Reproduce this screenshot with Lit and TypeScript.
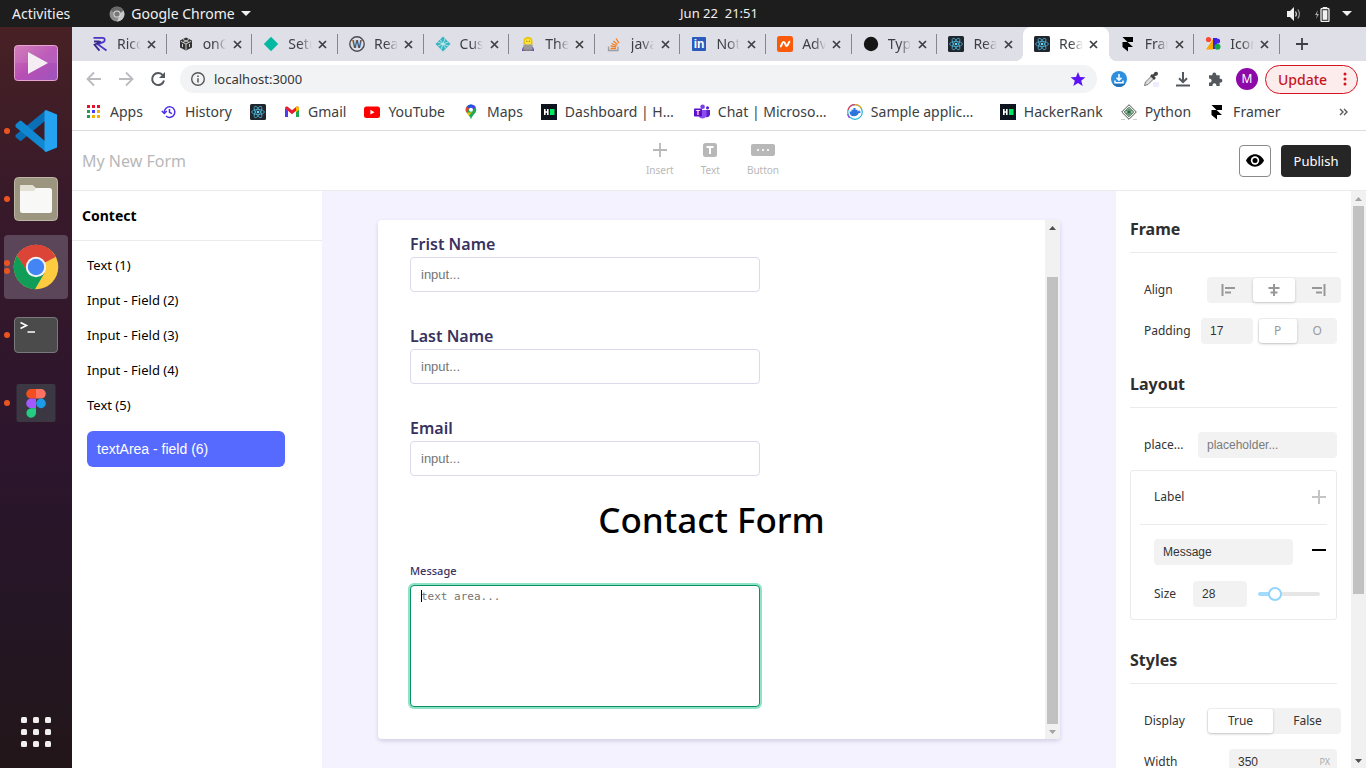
import { LitElement, html, css, svg, nothing, TemplateResult, SVGTemplateResult } from "lit";
import { customElement, state } from "lit/decorators.js";
import { classMap } from "lit/directives/class-map.js";
import { styleMap } from "lit/directives/style-map.js";

const draw = (body: SVGTemplateResult, w = 16, h = 16, box = `0 0 ${w} ${h}`): TemplateResult =>
  html`<svg width=${w} height=${h} viewBox=${box} fill="none" aria-hidden="true">${body}</svg>`;

const reactLogo = draw(svg`
  <rect width="16" height="16" rx="1.5" fill="#20262b"/>
  <g stroke="#4fb3d6" stroke-width="0.8">
    <ellipse cx="8" cy="8" rx="6.4" ry="2.5"/>
    <ellipse cx="8" cy="8" rx="6.4" ry="2.5" transform="rotate(60 8 8)"/>
    <ellipse cx="8" cy="8" rx="6.4" ry="2.5" transform="rotate(120 8 8)"/>
  </g><circle cx="8" cy="8" r="1.3" fill="#61dafb"/>`);

const framerLogo = draw(svg`<path d="M2.500 1h10.500v5H7.500zM2.500 6H7.500l5.500 5H8v4.500L2.500 11z" fill="#000"/>`);

const hackerRankLogo = draw(svg`
  <rect width="16" height="16" fill="#0e141e"/>
  <path d="M3 5h1.600v2.200h1.400V5h1.600v6H6V8.800H4.600V11H3z" fill="#fff"/>
  <rect x="9" y="5" width="4.500" height="6" fill="#00ea64"/>`);

const favicons: Record<string, TemplateResult> = {
  ricon: draw(svg`<g stroke="#4a33c8" stroke-width="1.800">
    <path d="M1.500 1.800h9c3 0 3 4.200-.5 4.700L6 8.500l8.500 6"/><path d="M2 5.500h5.500M9 5.500L2.500 8.700l5 6" stroke="#392a8c"/></g>`),
  cube: draw(svg`<path d="M8 1.500l6 3v7l-6 3-6-3v-7z" fill="#333"/>
    <path d="M8 8v6M8 8L2.800 5.300M8 8l5.200-2.700M5 3.500l6 3M11 3.500l-6 3M4.500 8v3M11.500 8v3" stroke="#ddd" stroke-width="0.9"/>`),
  diamond: draw(svg`<path d="M8 .8L15.200 8 8 15.200.8 8z" fill="#04b8a2"/>`),
  wiki: draw(svg`<circle cx="8" cy="8" r="7.200" stroke="#4b4d50" stroke-width="1.400"/>
    <text x="8" y="11.600" font-family="Liberation Sans" font-weight="bold" font-size="10" text-anchor="middle" fill="#4b4d50">W</text>`),
  netlify: draw(svg`<path d="M8 .5L15.500 8 8 15.500.5 8z" fill="#38b5c0"/>
    <path d="M2.500 6l11 4M5 3.500l6 9M10 2.500L6 13.500M3 10l10-4" stroke="#dff4f5" stroke-width="0.7"/>`),
  technologist: draw(svg`<path d="M3.500 8.500V5C3.500 2 5.500 1 8 1s4.500 1 4.500 4v3.500z" fill="#e6c200"/>
    <circle cx="8" cy="5.800" r="3.200" fill="#ffe23b"/><path d="M6.400 5.300h.9M8.900 5.300h.9" stroke="#553" />
    <path d="M2 15c0-4 2-5.500 6-5.500S14 11 14 15z" fill="#6a45b8"/>
    <rect x="3.500" y="8.500" width="9" height="6" rx=".6" fill="#9a9a9a"/><rect x="4" y="13.500" width="8" height="1.500" fill="#808080"/>`),
  stack: draw(svg`<path d="M2.500 10.500v4h9.500v-4" stroke="#9a9ea3" stroke-width="1.300"/>
    <path d="M4.500 12.500h5.600M4.700 10l5.500.9M5.500 7.500l5.100 2.100M7.200 4.900l4.300 3.500M10 2.500l3 4.600" stroke="#f48024" stroke-width="1.300"/>`),
  linkedin: draw(svg`<rect x="1" y="1" width="14" height="14" rx="1" fill="#2a5bbd"/>
    <text x="8" y="12.300" font-family="Liberation Sans" font-weight="bold" font-size="12" text-anchor="middle" fill="#fff">in</text>`),
  namecheap: draw(svg`<rect width="16" height="16" rx="2.500" fill="#fa5b0a"/>
    <path d="M3 10.500c2.200 0 1.600-4.500 3.600-4.500s1.600 4 3.200 4S11 5.500 13.200 5.500" stroke="#fff" stroke-width="2"/>`),
  dot: draw(svg`<circle cx="8" cy="8" r="7.200" fill="#151515"/>`),
  react: reactLogo,
  framer: framerLogo,
  iconify: draw(svg`<circle cx="3.500" cy="3.500" r="2.600" fill="#f43"/><path d="M1 13.500L8 3v10.500z" fill="#f9a800"/>
    <path d="M8 2h4v11H8z" fill="#3b1ee0"/>
    <circle cx="12.500" cy="5" r="2.600" fill="#4a22e8"/><circle cx="12.500" cy="10.800" r="3" fill="#0fa948"/>`),
};

const marks: Record<string, TemplateResult> = {
  apps: draw(svg`${[0, 1, 2].map((r) => [0, 1, 2].map((c) => svg`<rect x=${1 + c * 5} y=${1 + r * 5} width="3" height="3"
    fill=${["#e0122f", "#e0122f", "#e0122f", "#1e9c4f", "#4b3df5", "#f0b400", "#1e9c4f", "#f0b400", "#f0b400"][r * 3 + c]}/>`))}`),
  history: draw(svg`<g stroke="#4a2ff0" stroke-width="1.500"><path d="M3.300 8.600A5.300 5.300 0 1 1 5 12"/><path d="M.8 7l2.500 2.400L5.800 7"/><path d="M8.500 5v3.300l2.400 1.400"/></g>`),
  react: reactLogo,
  gmail: draw(svg`<path d="M1 4v9h3V6.500z" fill="#4b3df5"/><path d="M15 4v9h-3V6.500z" fill="#1fa950"/>
    <path d="M1 4.200C1 2.600 2.700 2 4 3l4 3.200L12 3c1.300-1 3-.4 3 1.200l-7 6z" fill="#ea1b2d"/><path d="M12 3c1.300-1 3-.4 3 1.200v1.600l-3 2.400z" fill="#fbbc04"/>`),
  youtube: draw(svg`<rect y="2.500" width="16" height="11.500" rx="2.500" fill="#f00"/><path d="M6.400 5.800v4.800l4.100-2.400z" fill="#fff"/>`),
  maps: draw(svg`<path d="M8 .5a5.300 5.300 0 0 0-5.300 5.300c0 3.700 4 5 5.300 9.700 1.300-4.700 5.300-6 5.300-9.700A5.300 5.300 0 0 0 8 .5z" fill="#1fa950"/>
    <path d="M3.400 8.600l2.900-4L3.800 2.600a5.400 5.400 0 0 0-.4 6z" fill="#ea4335"/><path d="M3.400 8.600c.7 1.200 1.600 2 2.500 3.200l4-4.900-1.900 1.500z" fill="#fbbc04"/>
    <path d="M3.800 2.600A5.300 5.300 0 0 1 9.600.8L6.500 4.900z" fill="#1a55e0"/><path d="M9.600.8a5.300 5.300 0 0 1 3 2.300L9.500 6.600 7.500 3.700z" fill="#4b3df5"/>
    <circle cx="8" cy="5.800" r="2" fill="#fff"/>`),
  hacker: hackerRankLogo,
  teams: draw(svg`<circle cx="8.600" cy="2.800" r="2.300" fill="#7b3fe4"/><circle cx="13.500" cy="3.800" r="1.600" fill="#5d20c4"/>
    <path d="M10.500 6H16v4.500a3 3 0 0 1-4 2.500z" fill="#5d20c4"/><path d="M4.500 6h8v5.500a4.200 4.200 0 0 1-8 0z" fill="#8b4cf0"/>
    <rect y="4.500" width="8" height="8" rx=".8" fill="#5a0fc8"/>
    <text x="4" y="11" font-family="Liberation Sans" font-weight="bold" font-size="7" text-anchor="middle" fill="#fff">T</text>`),
  docker: draw(svg`<circle cx="8" cy="8" r="7.300" stroke="#22b4d8" stroke-width="1.200"/>
    <path d="M1 6A7.300 7.300 0 0 1 8 .7" stroke="#e9405c" stroke-width="1.200"/><path d="M8 .7a7.300 7.300 0 0 1 6.300 3.600" stroke="#f6a800" stroke-width="1.200"/>
    <path d="M2.500 14a7.300 7.300 0 0 1-1.800-4" stroke="#9b3de0" stroke-width="1.200"/>
    <path d="M2.500 7.500h2V5.800h2V4h2v1.800h2v1.700c1-.1 1.300-1 1.500-1.500.6.600.8 1 .8 1.500l1.200.2c-.5 1-1.200 1.300-2.200 1.400C10.800 11.500 9 12.300 6.800 12.300 4 12.300 2.500 10.500 2.500 7.500z" fill="#2b74dc"/>`),
  python: draw(svg`<path d="M8 .7L15.300 8 8 15.300.7 8z" fill="#f5f5f2" stroke="#555"/><path d="M8 3.300L12.700 8 8 12.700 3.300 8z" fill="#9fc7ac" stroke="#3c6b4b"/>
    <path d="M5.500 6.500l5 3M10.500 6.500l-5 3M8 5v6" stroke="#2a5a3c"/><path d="M0 15.500h4M12 15.500h4" stroke="#ccc"/>`),
  framer: framerLogo,
};

const dockIcons: Record<string, TemplateResult> = {
  video: draw(svg`<defs><linearGradient id="v" x1="0" y1="0" x2="1" y2="1"><stop offset="0" stop-color="#cf74b4"/><stop offset=".5" stop-color="#b84fb5"/><stop offset="1" stop-color="#9c55bd"/></linearGradient></defs>
    <rect x="2.500" y="6.500" width="43" height="35" rx="3" fill="url(#v)" stroke="#e7a3d2"/><rect x="3" y="7" width="42" height="17" fill="#fff" opacity=".08"/>
    <path d="M16 13v22l20-11z" fill="#f4eef4"/>`, 48, 48),
  code: draw(svg`<path d="M34 3v10L9 34l-1.500-.5-4-3.500v-2z" fill="#0a6fb6"/><path d="M3.500 17.500l4-3.500L9 13.600 34 35v10l-30.500-25z" fill="#1088d2"/>
    <path d="M34 3l11 4.500v33L34 45l-1.500-1V4z" fill="#24a4f0"/>`, 48, 48),
  files: draw(svg`<rect x="2.500" y="2.500" width="43" height="43" rx="4" fill="#9c9580" stroke="#bdb7a5"/>
    <path d="M8 13a3 3 0 0 1 3-3h9l4 4v5H8z" fill="#e4e0d4"/><rect x="8" y="13" width="32" height="25" rx="2.500" fill="#f8f8f6"/><path d="M8 13V11a1 1 0 0 1 1-1h11.500l3.500 3-2 3H8z" fill="#e4e0d4"/>`, 48, 48),
  chrome: draw(svg`<circle cx="24" cy="24" r="22.300" fill="#fccb3f"/>
    <path d="M24 24L5 12.500A22.300 22.300 0 0 1 43.600 14z" fill="#dc4437"/><path d="M24 14h19.600A22 22 0 0 0 24 1.700 22.200 22.200 0 0 0 5 12.500L14.500 28z" fill="#dc4437"/>
    <path d="M5 12.500A22.300 22.300 0 0 0 23 46.300L32.500 30 24 33l-9-5z" fill="#109d58"/><circle cx="24" cy="24" r="10.200" fill="#f3f3f3"/><circle cx="24" cy="24" r="8.200" fill="#4385f5"/>`, 48, 48),
  terminal: draw(svg`<rect x="2.500" y="6.500" width="43" height="35" rx="3.500" fill="#4b4b4b" stroke="#77797a"/>
    <path d="M8.500 11.500l6 3-6 3M15.500 21H23" stroke="#fff" stroke-width="1.600"/>`, 48, 48),
  figma: draw(svg`<rect x="4.500" y="5" width="39" height="38" rx="2" fill="#3b3844"/>
    <path d="M24 10h-5a4.800 4.800 0 0 0 0 9.600h5z" fill="#f24e1e"/><path d="M24 10h5a4.800 4.800 0 0 1 0 9.600h-5z" fill="#ff7262"/>
    <path d="M24 19.600h-5a4.800 4.800 0 0 0 0 9.600h5z" fill="#a259ff"/><circle cx="29" cy="24.400" r="4.800" fill="#1b9bea"/>
    <path d="M24 29.200h-5a4.800 4.800 0 1 0 5 4.800z" fill="#24cb83"/>`, 48, 48),
};

@customElement("system-bar")
class SystemBar extends LitElement {
  static styles = css`
    :host { display: grid; grid-template-columns: 252px 1fr 180px; align-items: center; height: 27px; background: #1d1d1d; color: #f0f0f0; font: 14px/27px "Noto Sans", sans-serif; }
    button { all: unset; display: flex; align-items: center; white-space: nowrap; }
    .left { display: flex; padding-left: 12px; gap: 39px; }
    .app { gap: 6px; }
    .clock { justify-self: center; font-size: 13px; white-space: pre; }
    .status { justify-self: end; gap: 12px; padding-right: 14px; }
    svg { display: block; flex: none; }
  `;
  render() {
    return html`
      <div class="left">
        <button>Activities</button>
        <button class="app">
          ${draw(svg`<circle cx="8" cy="8" r="7.500" fill="#8d8d8d"/><path d="M1.500 4.500A7.500 7.500 0 0 1 14.500 4.500L8 8z" fill="#686868"/><path d="M14.500 4.500A7.500 7.500 0 0 1 8 15.500L11 8z" fill="#c9c9c9"/><circle cx="8" cy="8" r="3.600" fill="#ddd"/><circle cx="8" cy="8" r="2.600" fill="#777"/>`)}
          Google Chrome
          ${draw(svg`<path d="M0 1h10L5 6z" fill="#f0f0f0"/>`, 10, 7)}
        </button>
      </div>
      <button class="clock">Jun 22  21:51</button>
      <button class="status" aria-label="System menu">
        ${draw(svg`<path d="M1 5h3l4-4v14L4 11H1z" fill="#f0f0f0"/><path d="M9.500 5.500q1.800 2.500 0 5" stroke="#ddd" stroke-width="1.200"/><path d="M11.800 3.500q3.200 4.500 0 9" stroke="#999" stroke-width="1.200"/>`)}
        ${draw(svg`<path d="M4 4L1 9h2l-1 4 3-5H3z" fill="#aaa"/><rect x="7" y="2.500" width="8" height="13" rx="1" stroke="#f0f0f0" stroke-width="1.300"/><rect x="9" y="1" width="4" height="1.500" fill="#f0f0f0"/><rect x="8.600" y="4.200" width="4.800" height="9.600" fill="#f0f0f0"/>`)}
        ${draw(svg`<path d="M0 1h10L5 6z" fill="#f0f0f0"/>`, 10, 7)}
      </button>`;
  }
}

@customElement("app-dock")
class AppDock extends LitElement {
  static styles = css`
    :host { display: flex; flex-direction: column; align-items: center; box-sizing: border-box; width: 72px; padding: 4px 0; gap: 4px; background: linear-gradient(#472124, #37192a 25%, #2c152d 58%, #241624 80%, #221619); }
    button { all: unset; display: flex; align-items: center; box-sizing: border-box; width: 72px; height: 64px; }
    .tile { display: grid; place-items: center; width: 64px; height: 64px; border-radius: 4px; }
    .active { background: #5b4558; }
    .dots { display: flex; flex-direction: column; gap: 2px; width: 6px; margin: 0 -6px 0 4px; z-index: 1; }
    .dot { width: 6px; height: 6px; border-radius: 50%; background: #e95420; }
    .tile { margin-left: 4px; }
    .dots + .tile { margin-left: 0; }
    .grid { margin-top: auto; }
  `;
  apps = [
    { id: "video", label: "Videos", windows: 0 },
    { id: "code", label: "Visual Studio Code", windows: 1 },
    { id: "files", label: "Files", windows: 1 },
    { id: "chrome", label: "Google Chrome", windows: 2 },
    { id: "terminal", label: "Terminal", windows: 1 },
    { id: "figma", label: "Figma", windows: 1 },
  ];
  render() {
    return html`
      ${this.apps.map((a) => html`<button aria-label=${a.label}>
        <span class="dots">${Array.from({ length: a.windows }, () => html`<i class="dot"></i>`)}</span>
        <span class=${classMap({ tile: true, active: a.id === "chrome" })}>${dockIcons[a.id]}</span>
      </button>`)}
      <button class="grid" aria-label="Show Applications"><span class="tile">
        ${draw(svg`${[0, 1, 2].map((r) => [0, 1, 2].map((c) => svg`<rect x=${c * 12} y=${r * 12} width="6" height="6" rx="1.500" fill="#f0efed"/>`))}`, 30, 30)}
      </span></button>`;
  }
}

@customElement("browser-chrome")
class BrowserChrome extends LitElement {
  static styles = css`
    :host { display: block; font-family: "Noto Sans", sans-serif; color: #3c4043; border-bottom: 1px solid #dadce0; background: #fff; }
    button { all: unset; display: grid; place-items: center; }
    svg { display: block; flex: none; }
    .tabs { display: flex; height: 34px; padding-left: 9px; background: #dfdfe7; }
    .tab { position: relative; flex: 1 1 0; min-width: 0; display: flex; align-items: center; padding: 0 7px 0 11px; }
    .tab::after { content: ""; position: absolute; right: 0; top: 7px; width: 1px; height: 20px; background: #85868c; }
    .quiet::after { display: none; }
    .current { background: #fff; border-radius: 8px 8px 0 0; }
    .current::before { content: ""; position: absolute; left: -8px; right: -8px; bottom: 0; height: 8px; background: radial-gradient(circle at 0 0, transparent 8px, #fff 8px) left / 8px 8px no-repeat, radial-gradient(circle at 100% 0, transparent 8px, #fff 8px) right / 8px 8px no-repeat; }
    .title { flex: 1; margin: 0 3px 0 9px; overflow: hidden; white-space: nowrap; font-size: 14px; line-height: 20px; -webkit-mask-image: linear-gradient(90deg, #000 50%, transparent); }
    .close { width: 16px; height: 16px; }
    .new { width: 86px; height: 34px; }
    .new svg { margin-right: 42px; }
    .tools { display: flex; align-items: center; height: 36px; padding: 0 8px 0 14px; }
    .nav { width: 16px; margin-right: 16px; }
    .address { flex: 1; display: flex; align-items: center; gap: 8px; height: 28px; margin: 0 14px 0 -2px; padding: 0 11px 0 10px; border-radius: 14px; background: #f1f3f4; font-size: 13px; }
    .address input { all: unset; flex: 1; font: 13px/20px "Noto Sans", sans-serif; color: #33363a; }
    .ext { display: flex; align-items: center; gap: 16px; margin-right: 10px; }
    .avatar { width: 22px; height: 22px; margin: 0 -3px; border-radius: 50%; background: #8e0aa8; color: #fff; font-size: 12px; line-height: 22px; }
    .update { display: flex; align-items: center; justify-content: space-between; box-sizing: border-box; width: 93px; height: 29px; padding: 0 10px 0 12px; border: 1px solid #d3131f; border-radius: 15px; background: #fcecec; color: #c5161d; font-size: 14px; font-weight: 500; }
    .marks { display: flex; align-items: center; gap: 18px; height: 29px; padding: 0 18px 4px 14px; }
    .mark { display: flex; align-items: center; gap: 8px; color: inherit; text-decoration: none; font-size: 14px; line-height: 20px; white-space: nowrap; }
    .clipped { min-width: 111px; }
    .more { margin-left: auto; }
  `;
  tabs = [
    ["ricon", "Ricon"], ["cube", "onClick"], ["diamond", "Setup"], ["wiki", "React"], ["netlify", "Custom"], ["technologist", "The best"], ["stack", "javascript"],
    ["linkedin", "Notifications"], ["namecheap", "Advanced"], ["dot", "Typeform"], ["react", "React"], ["react", "React App"], ["framer", "Framer"], ["iconify", "Icons"],
  ];
  bookmarks = [
    ["apps", "Apps"], ["history", "History"], ["react", ""], ["gmail", "Gmail"], ["youtube", "YouTube"], ["maps", "Maps"], ["hacker", "Dashboard | H…"],
    ["teams", "Chat | Microso…"], ["docker", "Sample applic…"], ["hacker", "HackerRank"], ["python", "Python"], ["framer", "Framer"],
  ];
  render() {
    const current = 11;
    return html`
      <div class="tabs" role="tablist">
        ${this.tabs.map(([icon, title], i) => html`
          <div class=${classMap({ tab: true, current: i === current, quiet: i === current || i === current - 1 })} role="tab">
            ${favicons[icon]}<span class="title">${title}</span>
            <button class="close" aria-label="Close tab">${draw(svg`<path d="M1 1l7 7M8 1L1 8" stroke="#3c4043" stroke-width="1.700"/>`, 9, 9)}</button>
          </div>`)}
        <button class="new" aria-label="New tab">${draw(svg`<path d="M6 0v12M0 6h12" stroke="#3c4043" stroke-width="1.800"/>`, 12, 12)}</button>
      </div>
      <div class="tools">
        <button class="nav" aria-label="Back">${draw(svg`<path d="M15 8H2M8 1.500L1.500 8 8 14.500" stroke="#b9bbbe" stroke-width="1.800"/>`)}</button>
        <button class="nav" aria-label="Forward">${draw(svg`<path d="M1 8h13M8 1.500L14.500 8 8 14.500" stroke="#b9bbbe" stroke-width="1.800"/>`)}</button>
        <button class="nav" aria-label="Reload">${draw(svg`<path d="M13 4.500A6 6 0 1 0 14 9.500" stroke="#54585c" stroke-width="2"/><path d="M15 1v6H9z" fill="#54585c"/>`)}</button>
        <div class="address">
          ${draw(svg`<circle cx="8" cy="8" r="6.300" stroke="#54585c" stroke-width="1.400"/><path d="M8 7.200V11.500M8 4.500V6" stroke="#54585c" stroke-width="1.500"/>`)}
          <input aria-label="Address" value="localhost:3000" />
          ${draw(svg`<path d="M8 1l2 5 5.400.3-4.200 3.400 1.500 5.300L8 12l-4.700 3 1.500-5.300L.6 6.300 6 6z" fill="#5b12f5"/>`)}
        </div>
        <div class="ext">
          <button aria-label="Downloader">${draw(svg`<circle cx="8" cy="8" r="8" fill="#2d8fe0"/><path d="M1.500 12.500a8 8 0 0 0 13 0" fill="#2170b5"/><path d="M8 3v6M5.500 6.800L8 9.300l2.500-2.500M4 9.500v2.300h8V9.500" stroke="#fff" stroke-width="1.500"/>`)}</button>
          <button aria-label="Color picker">${draw(svg`<path d="M1.500 14.500L2.500 11l6.500-6.500 2.500 2.500L5 13.500z" fill="#ddd" stroke="#777"/><path d="M8 4l4 4M9.500 5.500L13 2.500" stroke="#444" stroke-width="2.600"/><circle cx="13" cy="2.800" r="2" fill="#444"/><rect x="10" y="11" width="6" height="5" rx="1" fill="#f0ecfe"/>`)}</button>
          <button aria-label="Downloads">${draw(svg`<path d="M8 1v10M4 7.200L8 11.200l4-4M1 14.500h14" stroke="#54585c" stroke-width="2"/>`)}</button>
          <button aria-label="Extensions">${draw(svg`<path d="M2 4.200h3.400a2 2 0 1 1 3.800 0h3.500v3.600a2 2 0 1 1 0 3.800V15H9.300a2 2 0 1 0-3.700 0H2v-3.500a2 2 0 1 0 0-3.800z" fill="#54585c"/>`)}</button>
          <button class="avatar" aria-label="Profile">M</button>
        </div>
        <button class="update">Update ${draw(svg`<g fill="#d3131f"><circle cx="2" cy="2" r="1.500"/><circle cx="2" cy="7" r="1.500"/><circle cx="2" cy="12" r="1.500"/></g>`, 4, 14)}</button>
      </div>
      <nav class="marks">
        ${this.bookmarks.map(([icon, label]) => html`<a class="mark" href="#" aria-label=${label || "React"}>${marks[icon]}${label ? html`<span class=${classMap({ clipped: label.endsWith("…") })}>${label}</span>` : nothing}</a>`)}
        <button class="more" aria-label="More bookmarks">${draw(svg`<path d="M1 1l3 3-3 3M5 1l3 3-3 3" stroke="#54585c" stroke-width="1.400"/>`, 9, 8)}</button>
      </nav>`;
  }
}

@customElement("scroll-rail")
class ScrollRail extends LitElement {
  static properties = { top: { type: Number }, size: { type: Number } };
  top = 0;
  size = 50;
  static styles = css`
    :host { display: grid; grid-template-rows: 15px 1fr 15px; width: 15px; background: #f1f1f1; }
    .arrow { place-self: center; }
    .track { display: flex; flex-direction: column; padding: 0 2px; }
    .thumb { background: #c1c1c1; }
    svg { display: block; }
  `;
  render() {
    const up = this.top > 0 ? "#505050" : "#a3a3a3";
    const down = this.top > 0 ? "#a3a3a3" : "#505050";
    return html`
      <span class="arrow">${draw(svg`<path d="M0 4L3.500 0 7 4z" fill=${up}/>`, 7, 4)}</span>
      <div class="track">
        <div style=${styleMap({ flex: `${this.top} 0 0` })}></div>
        <div class="thumb" style=${styleMap({ flex: `${this.size} 0 0` })}></div>
        <div style=${styleMap({ flex: `${100 - this.top - this.size} 0 0` })}></div>
      </div>
      <span class="arrow">${draw(svg`<path d="M0 0L3.500 4 7 0z" fill=${down}/>`, 7, 4)}</span>`;
  }
}

@customElement("form-canvas")
class FormCanvas extends LitElement {
  static styles = css`
    :host { display: flex; flex: 1; min-width: 0; padding: 29px 56px; background: #f4f2fe; font-family: "Noto Sans", sans-serif; }
    .card { flex: 1; display: flex; align-self: stretch; overflow: hidden; border-radius: 4px; background: #fff; box-shadow: 0 2px 4px rgba(60, 50, 110, 0.18); }
    form { flex: 1; display: flex; flex-direction: column; gap: 20px; padding: 12px 32px; }
    .fields { display: flex; flex-direction: column; gap: 32px; }
    .field { display: flex; flex-direction: column; }
    label { font-size: 16px; line-height: 25px; font-weight: 600; color: #38325f; }
    input, textarea { box-sizing: border-box; width: 100%; max-width: 350px; border: 1px solid #dcd9ea; border-radius: 4px; background: #fff; padding: 0 10px; outline: none; }
    input { height: 35px; font: 13px "Liberation Sans", sans-serif; }
    ::placeholder { color: #757575; opacity: 1; }
    h1 { margin: 0; font-size: 35px; line-height: 48px; font-weight: 500; color: #000; text-align: center; }
    .small { font-size: 11px; line-height: 14px; margin-bottom: 7px; font-weight: 500; }
    .area { position: relative; display: flex; }
    textarea { height: 122px; padding: 4px 10px; border-color: #0b8f63; box-shadow: 0 0 0 2px #8fe3c6; resize: none; font: 11px/13px "DejaVu Sans Mono", monospace; caret-color: transparent; }
    .caret { position: absolute; left: 11px; top: 5px; width: 1px; height: 12px; background: #000; }
  `;
  render() {
    return html`
      <div class="card">
        <form>
          <div class="fields">
            ${["Frist Name", "Last Name", "Email"].map((name, i) => html`<div class="field">
              <label for="f${i}">${name}</label><input id="f${i}" type="text" placeholder="input..." />
            </div>`)}
          </div>
          <h1>Contact Form</h1>
          <div class="field">
            <label class="small" for="msg">Message</label>
            <div class="area"><textarea id="msg" placeholder="text area..."></textarea><span class="caret"></span></div>
          </div>
        </form>
        <scroll-rail .top=${8.6} .size=${91.4}></scroll-rail>
      </div>`;
  }
}

@customElement("property-panel")
class PropertyPanel extends LitElement {
  @state() size = 28;
  @state() align = 1;
  static styles = css`
    :host { display: flex; width: 250px; flex: none; background: #fff; font: 12px/18px "Noto Sans", sans-serif; color: #333; }
    .body { flex: 1; min-width: 0; display: flex; flex-direction: column; gap: 28px; padding: 26px 14px 0; }
    h2 { margin: 0 0 24px; padding-bottom: 11px; border-bottom: 1px solid #ebebeb; font-size: 16px; line-height: 24px; font-weight: 700; color: #2e2e2e; }
    .rows { display: flex; flex-direction: column; gap: 15px; padding-left: 14px; }
    .row { display: flex; align-items: center; justify-content: space-between; height: 26px; }
    .wide { margin-right: -4px; }
    .narrow { width: 52px; }
    .pair { display: flex; gap: 5px; }
    input[type="text"] { box-sizing: border-box; height: 26px; border: 0; border-radius: 4px; background: #f2f2f2; padding: 0 9px; font: 12px "Liberation Sans", sans-serif; color: #333; outline: none; }
    ::placeholder { color: #7b7b7b; opacity: 1; }
    .medium { width: 139px; }
    .unit { display: flex; align-items: center; width: 108px; border-radius: 4px; background: #f2f2f2; font-size: 9px; color: #aaa; }
    .unit input { flex: 1; min-width: 0; }
    .unit span { padding-right: 7px; }
    .seg { display: flex; height: 26px; border-radius: 4px; background: #f2f2f2; }
    .seg button { all: unset; flex: 1; display: grid; place-items: center; margin: 1px; border-radius: 3px; color: inherit; }
    .seg .on { background: #fff; box-shadow: 0 1px 3px rgba(0, 0, 0, 0.2); }
    .full { width: 134px; }
    .duo { width: 79px; color: #999; }
    .box { display: flex; flex-direction: column; margin-top: 12px; padding: 13px 9px 12px; border: 1px solid #ebebeb; border-radius: 3px; }
    .boxhead { display: flex; justify-content: space-between; align-items: center; height: 26px; padding: 0 1px 0 14px; }
    hr { width: 100%; margin: 14px 0; border: 0; border-top: 1px solid #ebebeb; }
    .inner { display: flex; flex-direction: column; gap: 16px; padding: 0 1px 0 14px; }
    .icon { all: unset; }
    .sizer { display: flex; align-items: center; }
    .sizer input[type="text"] { width: 54px; margin: 0 11px 0 17px; }
    input[type="range"] { -webkit-appearance: none; appearance: none; width: 62px; height: 14px; margin: 0; background: transparent; }
    input[type="range"]::-webkit-slider-runnable-track { height: 4px; border-radius: 2px; background: linear-gradient(90deg, #a3dbff var(--fill), #e6e6e6 var(--fill)); }
    input[type="range"]::-webkit-slider-thumb { -webkit-appearance: none; box-sizing: border-box; width: 14px; height: 14px; margin-top: -5px; border: 2px solid #91d5ff; border-radius: 50%; background: #fff; }
    svg { display: block; }
  `;
  render() {
    const glyphs = [
      svg`<path d="M1.500 1v12M4 5h10M4 9.500h6" />`,
      svg`<path d="M8 1v12M2.500 5h11M4.500 9.500h7" />`,
      svg`<path d="M13.500 1v12M1 5h10M5 9.500h6" />`,
    ];
    return html`
      <div class="body">
        <section>
          <h2>Frame</h2>
          <div class="rows">
            <div class="row wide"><span>Align</span>
              <div class="seg full">
                ${glyphs.map((g, i) => html`<button class=${classMap({ on: i === this.align })} aria-label=${["Left", "Center", "Right"][i]} @click=${() => (this.align = i)}>
                  ${draw(svg`<g stroke="#979797" stroke-width="2">${g}</g>`, 16, 14)}</button>`)}
              </div></div>
            <div class="row"><label for="pad">Padding</label>
              <div class="pair"><input class="narrow" id="pad" type="text" value="17" />
                <div class="seg duo"><button class="on">P</button><button>O</button></div></div></div>
          </div>
        </section>
        <section>
          <h2>Layout</h2>
          <div class="rows"><div class="row"><label for="ph">place...</label><input class="medium" id="ph" type="text" placeholder="placeholder..." /></div></div>
          <div class="box">
            <div class="boxhead"><label for="lab">Label</label><button class="icon" aria-label="Add">${draw(svg`<path d="M7 0v14M0 7h14" stroke="#c4c4c4" stroke-width="2"/>`, 14, 14)}</button></div>
            <hr />
            <div class="inner">
              <div class="row"><input class="medium" id="lab" type="text" value="Message" /><button class="icon" aria-label="Remove">${draw(svg`<path d="M0 1h14" stroke="#000" stroke-width="2"/>`, 14, 6)}</button></div>
              <div class="sizer"><label for="size">Size</label><input id="size" type="text" .value=${String(this.size)} />
                <input type="range" aria-label="Size" min="10" max="100" .value=${String(this.size)} style=${styleMap({ "--fill": `${this.size}%` })}
                  @input=${(e: Event) => (this.size = Number((e.target as HTMLInputElement).value))} /></div>
            </div>
          </div>
        </section>
        <section>
          <h2>Styles</h2>
          <div class="rows">
            <div class="row wide"><span>Display</span><div class="seg full"><button class="on">True</button><button>False</button></div></div>
            <div class="row"><label for="w">Width</label><div class="unit"><input id="w" type="text" value="350" /><span>PX</span></div></div>
          </div>
        </section>
      </div>
      <scroll-rail .top=${0} .size=${71}></scroll-rail>`;
  }
}

@customElement("form-builder")
class FormBuilder extends LitElement {
  static styles = css`
    :host { display: flex; flex-direction: column; flex: 1; min-height: 0; background: #fff; font-family: "Noto Sans", sans-serif; }
    header { flex: none; display: flex; align-items: center; justify-content: space-between; height: 59px; padding: 0 15px 0 10px; border-bottom: 1px solid #ebebeb; }
    .name { font-size: 16px; color: #b8b8b8; }
    .palette { display: flex; gap: 27px; }
    .palette button { all: unset; display: flex; flex-direction: column; align-items: center; gap: 5px; font-size: 10px; line-height: 14px; color: #b8b8b8; padding-bottom: 2px; }
    .actions { display: flex; gap: 10px; }
    .actions button { all: unset; box-sizing: border-box; display: grid; place-items: center; height: 32px; border-radius: 4px; }
    .actions .view { width: 32px; border: 1px solid #8a8a8a; }
    .actions .publish { width: 70px; background: #262626; color: #fff; font-size: 13px; }
    .work { display: flex; flex: 1; min-height: 0; overflow: hidden; }
    aside { width: 250px; flex: none; }
    h2 { margin: 0; padding: 0 10px; border-bottom: 1px solid #ebebeb; font-size: 14px; line-height: 49px; font-weight: 700; }
    ul { list-style: none; margin: 0; padding: 7px 37px 0 15px; }
    li button { all: unset; display: block; width: 100%; font-size: 13px; line-height: 35px; color: #000; }
    li .chosen { box-sizing: border-box; margin-top: 8px; padding: 0 10px; border-radius: 6px; background: #566aff; color: #fff; font: 14px/36px "Liberation Sans", sans-serif; }
    svg { display: block; }
  `;
  layers = ["Text (1)", "Input - Field (2)", "Input - Field (3)", "Input - Field (4)", "Text (5)", "textArea - field (6)"];
  render() {
    return html`
      <header>
        <div class="name">My New Form</div>
        <div class="palette">
          <button>${draw(svg`<path d="M8 1v14M1 8h14" stroke="#b8b8b8" stroke-width="1.800"/>`)}Insert</button>
          <button>${draw(svg`<rect x="1" y="1" width="14" height="14" rx="2.500" fill="#b8b8b8"/><path d="M4.500 5h7M8 5v7" stroke="#fff" stroke-width="2"/>`)}Text</button>
          <button>${draw(svg`<rect y="2" width="24" height="12" rx="2" fill="#b8b8b8"/><g fill="#fff"><circle cx="7" cy="8" r="1.100"/><circle cx="12" cy="8" r="1.100"/><circle cx="17" cy="8" r="1.100"/></g>`, 24, 16)}Button</button>
        </div>
        <div class="actions">
          <button class="view" aria-label="Preview">${draw(svg`<path d="M0 6.500C2 2.500 5.500 .3 9 .3s7 2.200 9 6.200c-2 4-5.500 6.200-9 6.200s-7-2.200-9-6.200z" fill="#000"/><circle cx="9" cy="6.500" r="4.200" fill="#fff"/><circle cx="9" cy="6.500" r="2.500" fill="#000"/>`, 18, 13)}</button>
          <button class="publish">Publish</button>
        </div>
      </header>
      <div class="work">
        <aside>
          <h2>Contect</h2>
          <ul>${this.layers.map((l, i) => html`<li><button class=${classMap({ chosen: i === 5 })}>${l}</button></li>`)}</ul>
        </aside>
        <form-canvas></form-canvas>
        <property-panel></property-panel>
      </div>`;
  }
}

@customElement("app-root")
class AppRoot extends LitElement {
  static styles = css`
    :host { display: flex; flex-direction: column; height: 100vh; overflow: hidden; }
    .desktop { flex: 1; min-height: 0; display: flex; }
    .window { flex: 1; min-width: 0; display: flex; flex-direction: column; }
  `;
  render() {
    return html`
      <system-bar></system-bar>
      <div class="desktop">
        <app-dock></app-dock>
        <div class="window"><browser-chrome></browser-chrome><form-builder></form-builder></div>
      </div>`;
  }
}
